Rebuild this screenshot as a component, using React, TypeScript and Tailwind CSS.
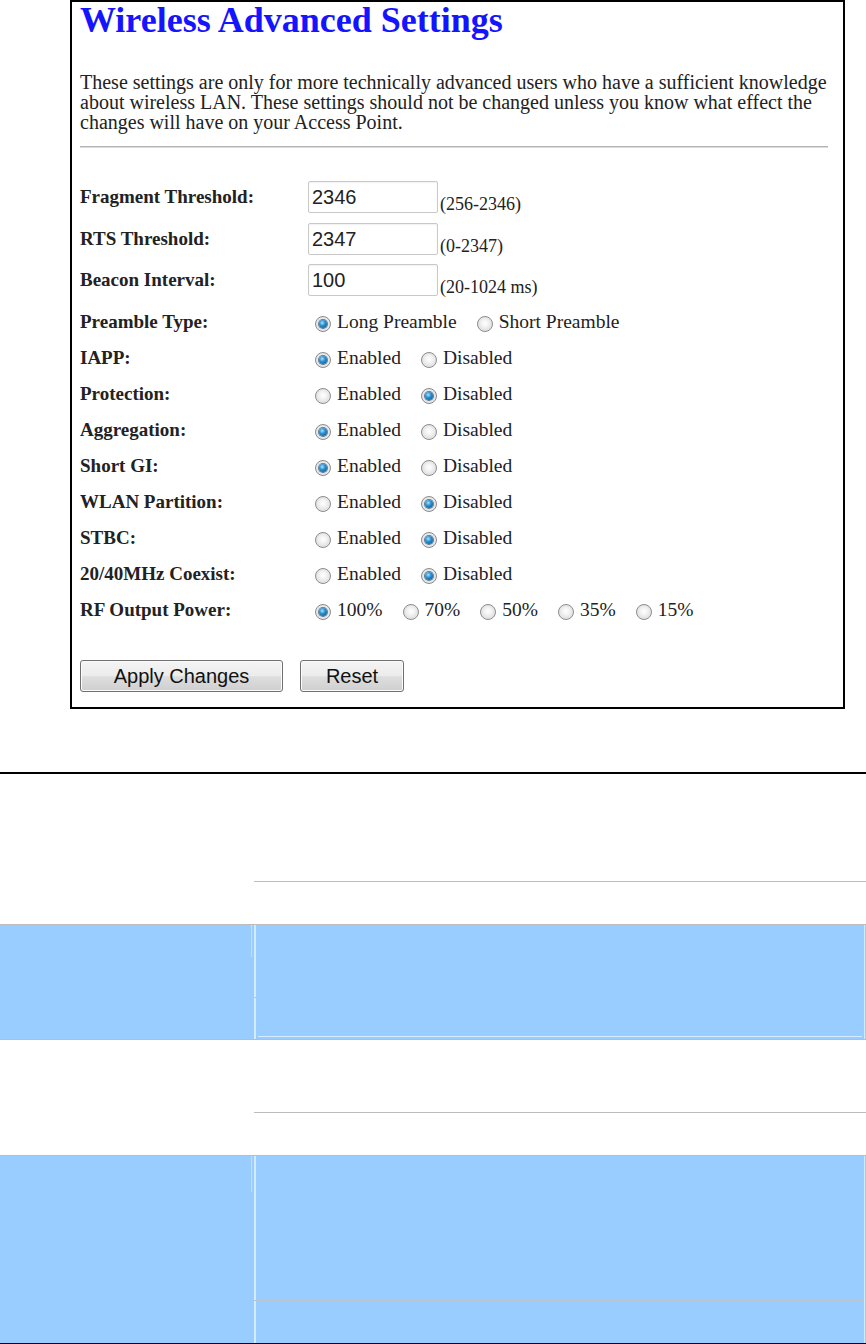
import React from "react";

const serif = "font-['Liberation_Serif','Times_New_Roman',serif]";
const sans = "font-['Liberation_Sans',Arial,sans-serif]";

function Radio({ checked }: { checked: boolean }) {
  return (
    <span className="mt-[4px] inline-flex w-[16px] h-[16px] shrink-0 items-center justify-center rounded-full border border-[#8c8c8c] bg-[radial-gradient(circle_at_50%_45%,#ffffff_0%,#f2f2f2_35%,#cfcfcf_100%)] shadow-[inset_0_0_0_1px_#e6e6e6]">
      {checked && (
        <span className="block w-[8px] h-[8px] rounded-full bg-[radial-gradient(circle_at_40%_35%,#a6e4ff_0%,#2a90d4_40%,#0b4a80_100%)] shadow-[0_0_0_1px_#5a7d99]" />
      )}
    </span>
  );
}

type RadioRow = { label: string; opts: string[]; sel: number };

const ED = ["Enabled", "Disabled"];

const radioRows: RadioRow[] = [
  { label: "Preamble Type:", opts: ["Long Preamble", "Short Preamble"], sel: 0 },
  { label: "IAPP:", opts: ED, sel: 0 },
  { label: "Protection:", opts: ED, sel: 1 },
  { label: "Aggregation:", opts: ED, sel: 0 },
  { label: "Short GI:", opts: ED, sel: 0 },
  { label: "WLAN Partition:", opts: ED, sel: 1 },
  { label: "STBC:", opts: ED, sel: 1 },
  { label: "20/40MHz Coexist:", opts: ED, sel: 1 },
  { label: "RF Output Power:", opts: ["100%", "70%", "50%", "35%", "15%"], sel: 0 },
];

const inputRows = [
  { label: "Fragment Threshold:", value: "2346", range: "(256-2346)", h: "h-[42px]" },
  { label: "RTS Threshold:", value: "2347", range: "(0-2347)", h: "h-[41px]" },
  { label: "Beacon Interval:", value: "100", range: "(20-1024 ms)", h: "h-[40px]" },
];

function GrayLine({ full }: { full?: boolean }) {
  return <div className={`h-[1px] bg-[#bcbcbc] ${full ? "w-full" : ""}`} />;
}

export default function App() {
  return (
    <div className={`w-[866px] h-[1344px] bg-white text-[#222] ${serif} overflow-hidden`}>
      {/* Settings panel */}
      <div className="ml-[70px] w-[775px] h-[709px] border-2 border-black pl-[8px] flex flex-col">
        <h1 className="text-[36px] leading-[36px] font-bold text-[#1414ff]">Wireless Advanced Settings</h1>
        <p className="mt-[34px] text-[20px] leading-[20px] text-[#222]">
          These settings are only for more technically advanced users who have a sufficient knowledge
          <br />
          about wireless LAN. These settings should not be changed unless you know what effect the
          <br />
          changes will have on your Access Point.
        </p>
        <div className="mt-[14px] w-[748px] h-[2px] bg-[#b4b4b4] border-b border-[#dcdcdc]" />

        <div className="mt-[33px] flex flex-col">
          {inputRows.map((r) => (
            <div key={r.label} className={`flex items-start ${r.h}`}>
              <div className="w-[228px] shrink-0 text-[19px] leading-[32px] font-bold">{r.label}</div>
              <input
                readOnly
                defaultValue={r.value}
                className={`w-[130px] h-[32px] border border-[#c9c9c9] rounded-[2px] px-[3px] text-[20px] ${sans} text-[#222] bg-white shadow-[inset_0_1px_2px_rgba(0,0,0,0.06)] outline-none`}
              />
              <span className="ml-[2px] mt-[14px] text-[18px] leading-[18px]">{r.range}</span>
            </div>
          ))}
          {radioRows.map((r) => (
            <div key={r.label} className="flex items-center h-[36px]">
              <div className="w-[228px] shrink-0 text-[19px] leading-[36px] font-bold">{r.label}</div>
              <div className="ml-[7px] flex items-center gap-[20px]">
                {r.opts.map((o, i) => (
                  <label key={o} className="flex items-center gap-[6px]">
                    <Radio checked={i === r.sel} />
                    <span className="text-[19.5px] leading-[36px]">{o}</span>
                  </label>
                ))}
              </div>
            </div>
          ))}
        </div>

        <div className="mt-[32px] flex gap-[17px]">
          <button
            className={`w-[203px] h-[32px] border border-[#707070] rounded-[3px] bg-[linear-gradient(#f4f4f4_0%,#ececec_50%,#dedede_52%,#cfcfcf_100%)] text-[20px] ${sans} text-[#111] shadow-[inset_0_0_0_1px_#fbfbfb]`}
          >
            Apply Changes
          </button>
          <button
            className={`w-[104px] h-[32px] border border-[#707070] rounded-[3px] bg-[linear-gradient(#f4f4f4_0%,#ececec_50%,#dedede_52%,#cfcfcf_100%)] text-[20px] ${sans} text-[#111] shadow-[inset_0_0_0_1px_#fbfbfb]`}
          >
            Reset
          </button>
        </div>
      </div>

      {/* Table below */}
      <div className="mt-[63px] h-[2px] bg-black" />

      {/* Row A */}
      <div className="flex h-[150px]">
        <div className="w-[254px] shrink-0" />
        <div className="flex-1 flex flex-col">
          <div className="h-[107px]" />
          <GrayLine />
        </div>
      </div>
      <GrayLine full />

      {/* Row B */}
      <div className="flex h-[114px] bg-[#99ccff]">
        <div className="w-[254px] shrink-0 flex justify-end">
          <div className="mr-[2px] w-[1px] h-[32px] bg-[#c4e2ff]" />
        </div>
        <div className="flex-1 mr-[1px] flex flex-col border-l-2 border-r border-[#d3eaff]">
          <div className="h-[72px]" />
          <div className="-ml-[2px] h-[1px] bg-[#b8c4cf]" />
          <div className="flex-1 flex flex-col justify-end pb-[2px] px-[2px]">
            <div className="h-[1px] bg-[#d3eaff]" />
          </div>
        </div>
      </div>
      <GrayLine full />

      {/* Row C */}
      <div className="flex h-[115px]">
        <div className="w-[254px] shrink-0" />
        <div className="flex-1 flex flex-col">
          <div className="h-[72px]" />
          <GrayLine />
        </div>
      </div>
      <GrayLine full />

      {/* Row D */}
      <div className="flex h-[187px] bg-[#99ccff]">
        <div className="w-[254px] shrink-0 flex justify-end">
          <div className="mr-[2px] w-[1px] h-[36px] bg-[#c4e2ff]" />
        </div>
        <div className="flex-1 mr-[1px] flex flex-col border-l-2 border-r border-[#d3eaff]">
          <div className="h-[144px]" />
          <div className="-ml-[2px] h-[1px] bg-[#b8c4cf]" />
        </div>
      </div>
      <div className="h-[1px] bg-black" />
    </div>
  );
}
